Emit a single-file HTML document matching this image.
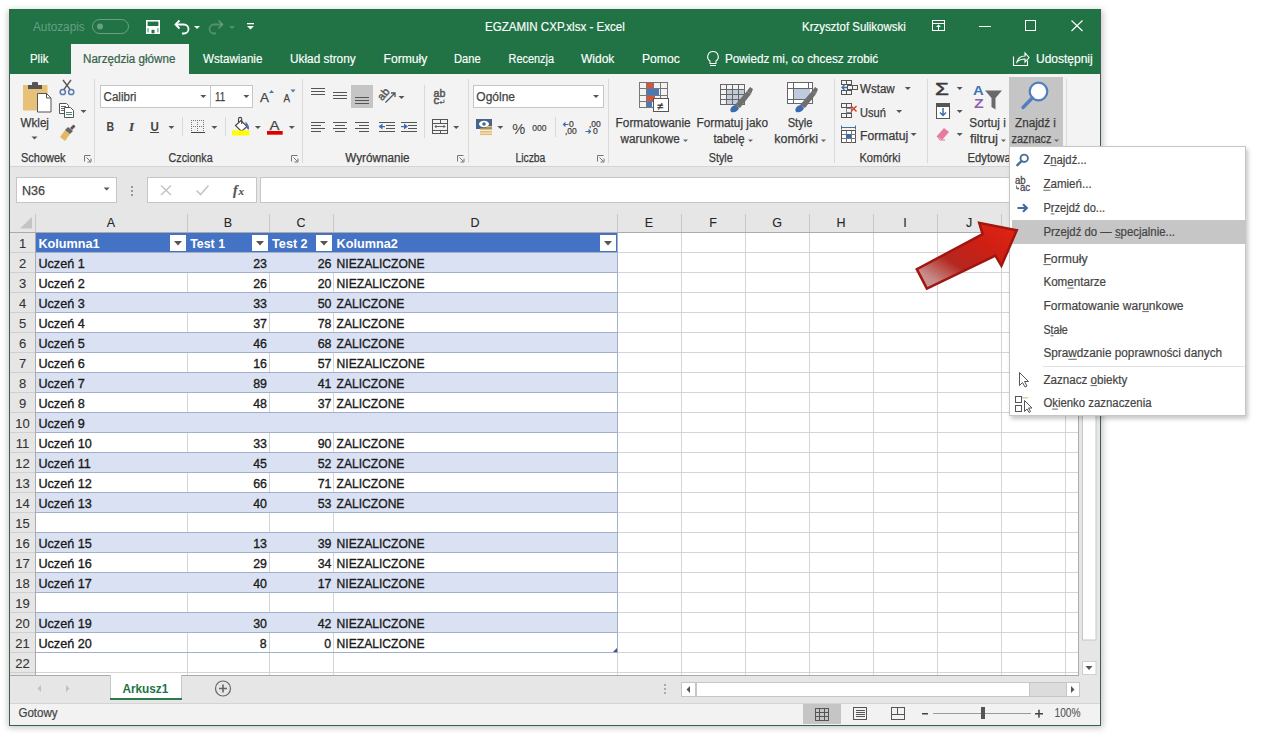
<!DOCTYPE html>
<html><head><meta charset="utf-8">
<style>
*{margin:0;padding:0}
html,body{width:1270px;height:745px;overflow:hidden;background:#fff}
svg{display:block}
text{font-family:"Liberation Sans",sans-serif}
</style></head><body>
<svg width="1270" height="745" viewBox="0 0 1270 745">
<defs><filter id="sh" x="-5%" y="-5%" width="110%" height="110%"><feGaussianBlur stdDeviation="3"/></filter><filter id="msh" x="-10%" y="-10%" width="120%" height="120%"><feGaussianBlur stdDeviation="2"/></filter><linearGradient id="ag" x1="0" y1="1" x2="1" y2="0"><stop offset="0" stop-color="#d0a0a0"/><stop offset="0.15" stop-color="#c68a88"/><stop offset="0.38" stop-color="#b5271f"/><stop offset="0.65" stop-color="#cc1f14"/><stop offset="1" stop-color="#e52412"/></linearGradient></defs>
<rect x="8" y="10" width="1095" height="718" fill="rgba(0,0,0,0.22)" filter="url(#sh)"/>
<rect x="9" y="9" width="1092" height="717" fill="#e6e6e6" />
<rect x="9" y="9" width="1092" height="65" fill="#217346" />
<rect x="9" y="9" width="1" height="717" fill="#3d5f4e" />
<rect x="1100" y="9" width="1" height="717" fill="#3d5f4e" />
<rect x="9" y="725" width="1092" height="1" fill="#3d5f4e" />
<rect x="10" y="724" width="1090" height="1" fill="#e8f4ee" />
<rect x="1099" y="704" width="1" height="21" fill="#e8f4ee" />
<rect x="10" y="74" width="1" height="651" fill="#e3f1ea" />
<text x="33.00" y="31" font-size="12" fill="rgba(255,255,255,0.32)" textLength="51.69" lengthAdjust="spacingAndGlyphs" >Autozapis</text>
<rect x="92.5" y="19.5" width="36" height="14" rx="7" fill="none" stroke="rgba(255,255,255,0.32)" stroke-width="1"/>
<circle cx="100" cy="26.5" r="3" fill="rgba(255,255,255,0.32)"/>
<rect x="146.8" y="20.8" width="12.4" height="12.4" fill="none" stroke="#fff" stroke-width="1.6"/>
<rect x="146" y="26" width="14" height="2.2" fill="#ffffff" />
<rect x="148.5" y="28" width="9" height="5" fill="#ffffff" />
<rect x="151.5" y="29.8" width="3" height="3.5" fill="#217346" />
<path d="M176 24.5 h8 a4.5 4.5 0 0 1 0 9 h-2" fill="none" stroke="#ffffff" stroke-width="1.8" />
<path d="M179.5 20.5 l-4 4 l4 4" fill="none" stroke="#ffffff" stroke-width="1.8" />
<path d="M194 26h6l-3 3z" fill="#ffffff" />
<path d="M222 24.5 h-8 a4.5 4.5 0 0 0 0 9 h2" fill="none" stroke="rgba(255,255,255,0.22)" stroke-width="1.8" />
<path d="M218.5 20.5 l4 4 l-4 4" fill="none" stroke="rgba(255,255,255,0.22)" stroke-width="1.8" />
<path d="M229 26h6l-3 3z" fill="rgba(255,255,255,0.22)" />
<rect x="247" y="23" width="7" height="1.3" fill="#ffffff" />
<path d="M247 26h7l-3.5 3.5z" fill="#ffffff" />
<text x="485.00" y="31" font-size="12" fill="#ffffff" textLength="139.78" lengthAdjust="spacingAndGlyphs" stroke="#ffffff" stroke-width="0.15" >EGZAMIN CXP.xlsx  -  Excel</text>
<text x="802.00" y="31" font-size="12" fill="#ffffff" textLength="103.70" lengthAdjust="spacingAndGlyphs" stroke="#ffffff" stroke-width="0.15" >Krzysztof Sulikowski</text>
<rect x="932.5" y="20.5" width="12" height="10" fill="none" stroke="#fff" stroke-width="1"/>
<rect x="933" y="23" width="12" height="1" fill="#ffffff" />
<path d="M938.5 24.5l-2.5 2.5h5z" fill="#ffffff" />
<rect x="938" y="26" width="1" height="4" fill="#ffffff" />
<rect x="979" y="26" width="12" height="1" fill="#ffffff" />
<rect x="1025.5" y="20.5" width="10" height="10" fill="none" stroke="#fff" stroke-width="1"/>
<path d="M1071.5 20.5l11 10.5M1082.5 20.5l-11 10.5" fill="none" stroke="#ffffff" stroke-width="1.1" />
<rect x="71" y="44" width="118" height="30" fill="#f3f3f3" />
<text x="30.00" y="63" font-size="12" fill="#ffffff" textLength="18.38" lengthAdjust="spacingAndGlyphs" stroke="#ffffff" stroke-width="0.15" >Plik</text>
<text x="83.00" y="63" font-size="12" fill="#35614a" textLength="92.41" lengthAdjust="spacingAndGlyphs" stroke="#35614a" stroke-width="0.2" >Narzędzia główne</text>
<text x="203.00" y="63" font-size="12" fill="#ffffff" textLength="59.38" lengthAdjust="spacingAndGlyphs" stroke="#ffffff" stroke-width="0.15" >Wstawianie</text>
<text x="290.00" y="63" font-size="12" fill="#ffffff" textLength="65.69" lengthAdjust="spacingAndGlyphs" stroke="#ffffff" stroke-width="0.15" >Układ strony</text>
<text x="383.50" y="63" font-size="12" fill="#ffffff" textLength="43.85" lengthAdjust="spacingAndGlyphs" stroke="#ffffff" stroke-width="0.15" >Formuły</text>
<text x="454.00" y="63" font-size="12" fill="#ffffff" textLength="26.71" lengthAdjust="spacingAndGlyphs" stroke="#ffffff" stroke-width="0.15" >Dane</text>
<text x="508.50" y="63" font-size="12" fill="#ffffff" textLength="45.53" lengthAdjust="spacingAndGlyphs" stroke="#ffffff" stroke-width="0.15" >Recenzja</text>
<text x="581.00" y="63" font-size="12" fill="#ffffff" textLength="33.34" lengthAdjust="spacingAndGlyphs" stroke="#ffffff" stroke-width="0.15" >Widok</text>
<text x="642.00" y="63" font-size="12" fill="#ffffff" textLength="37.85" lengthAdjust="spacingAndGlyphs" stroke="#ffffff" stroke-width="0.15" >Pomoc</text>
<path d="M713 51.5a5.2 5.2 0 0 0-3 9.5v2.5h6v-2.5a5.2 5.2 0 0 0-3-9.5z" fill="none" stroke="#ffffff" stroke-width="1.1" />
<rect x="710" y="65" width="6" height="1" fill="#ffffff" />
<text x="725.00" y="63" font-size="12" fill="#ffffff" textLength="153.21" lengthAdjust="spacingAndGlyphs" stroke="#ffffff" stroke-width="0.15" >Powiedz mi, co chcesz zrobić</text>
<path d="M1013.5 56.5v9h14v-5" fill="none" stroke="#ffffff" stroke-width="1.1" />
<path d="M1017 62c1-4 4-6 8-6v-3l4 4.5-4 4.5v-3c-3 0-6 1-8 3z" fill="none" stroke="#ffffff" stroke-width="1.1" />
<text x="1036.00" y="63" font-size="12" fill="#ffffff" textLength="56.70" lengthAdjust="spacingAndGlyphs" stroke="#ffffff" stroke-width="0.15" >Udostępnij</text>
<rect x="10" y="74" width="1090" height="92" fill="#f3f3f3" />
<rect x="10" y="166" width="1090" height="1" fill="#d4d4d4" />
<rect x="94" y="79" width="1" height="84" fill="#d9d9d9" />
<rect x="302" y="79" width="1" height="84" fill="#d9d9d9" />
<rect x="468" y="79" width="1" height="84" fill="#d9d9d9" />
<rect x="608" y="79" width="1" height="84" fill="#d9d9d9" />
<rect x="834" y="79" width="1" height="84" fill="#d9d9d9" />
<rect x="927" y="79" width="1" height="84" fill="#d9d9d9" />
<rect x="1066" y="79" width="1" height="84" fill="#d9d9d9" />
<text x="21.00" y="162" font-size="12" fill="#3b3b3b" textLength="44.50" lengthAdjust="spacingAndGlyphs" stroke="#3b3b3b" stroke-width="0.25" >Schowek</text>
<text x="168.60" y="162" font-size="12" fill="#3b3b3b" textLength="44.03" lengthAdjust="spacingAndGlyphs" stroke="#3b3b3b" stroke-width="0.25" >Czcionka</text>
<text x="345.30" y="162" font-size="12" fill="#3b3b3b" textLength="64.22" lengthAdjust="spacingAndGlyphs" stroke="#3b3b3b" stroke-width="0.25" >Wyrównanie</text>
<text x="515.40" y="162" font-size="12" fill="#3b3b3b" textLength="29.93" lengthAdjust="spacingAndGlyphs" stroke="#3b3b3b" stroke-width="0.25" >Liczba</text>
<text x="708.80" y="162" font-size="12" fill="#3b3b3b" textLength="23.91" lengthAdjust="spacingAndGlyphs" stroke="#3b3b3b" stroke-width="0.25" >Style</text>
<text x="859.40" y="162" font-size="12" fill="#3b3b3b" textLength="41.01" lengthAdjust="spacingAndGlyphs" stroke="#3b3b3b" stroke-width="0.25" >Komórki</text>
<text x="967.60" y="162" font-size="12" fill="#3b3b3b" textLength="58.03" lengthAdjust="spacingAndGlyphs" stroke="#3b3b3b" stroke-width="0.25" >Edytowanie</text>
<path d="M84.5 161.5v-6h6" fill="none" stroke="#777" stroke-width="1"/>
<path d="M86.5 157.5l4 4M91 158.5v3.5h-3.5" fill="none" stroke="#777" stroke-width="1"/>
<path d="M291.5 161.5v-6h6" fill="none" stroke="#777" stroke-width="1"/>
<path d="M293.5 157.5l4 4M298 158.5v3.5h-3.5" fill="none" stroke="#777" stroke-width="1"/>
<path d="M457.5 161.5v-6h6" fill="none" stroke="#777" stroke-width="1"/>
<path d="M459.5 157.5l4 4M464 158.5v3.5h-3.5" fill="none" stroke="#777" stroke-width="1"/>
<path d="M597.5 161.5v-6h6" fill="none" stroke="#777" stroke-width="1"/>
<path d="M599.5 157.5l4 4M604 158.5v3.5h-3.5" fill="none" stroke="#777" stroke-width="1"/>
<rect x="23" y="85" width="24.5" height="25.5" fill="#e8c178"/>
<rect x="28" y="85" width="14" height="4" fill="#555"/>
<rect x="32" y="82" width="6" height="4" rx="1" fill="#555"/>
<path d="M37.5 93.5h9l4.5 4.5v14h-13.5z" fill="#fff" stroke="#555" stroke-width="1" />
<path d="M46.5 93.5v4.5h4.5" fill="none" stroke="#555" stroke-width="1" />
<text x="20.60" y="127" font-size="12" fill="#3b3b3b" textLength="28.33" lengthAdjust="spacingAndGlyphs" stroke="#3b3b3b" stroke-width="0.25" >Wklej</text>
<path d="M31.5 136.5h6l-3 3z" fill="#555"/>
<circle cx="62.8" cy="92" r="2.6" fill="none" stroke="#5a79b2" stroke-width="1.5"/>
<circle cx="71.2" cy="92" r="2.6" fill="none" stroke="#5a79b2" stroke-width="1.5"/>
<path d="M64 89.3l7-9.3M70 89.3l-7-9.3" fill="none" stroke="#555" stroke-width="1.4" />
<path d="M59.5 103.5h7l2 2v8h-9z" fill="#fff" stroke="#555" stroke-width="1" />
<path d="M64.5 107.5h6l3 3v7h-9z" fill="#fff" stroke="#555" stroke-width="1" />
<rect x="61" y="106" width="5" height="1" fill="#666" />
<rect x="61" y="108" width="3" height="1" fill="#666" />
<rect x="61" y="110" width="3" height="1" fill="#666" />
<rect x="66" y="112" width="6" height="1" fill="#4a8a7a" />
<rect x="66" y="114" width="6" height="1" fill="#4a8a7a" />
<path d="M80.5 110.0h6l-3 3z" fill="#555"/>
<path d="M60 137l5-7 5 4-5 7z" fill="#e3b865" />
<path d="M65 130l3-3 5 4-3 3z" fill="#666" />
<path d="M70 128l3.5-3.5 2 2-3.5 3.5z" fill="#555" />
<rect x="100.5" y="85.5" width="152" height="22" fill="#fff" stroke="#c6c6c6" stroke-width="1"/>
<rect x="210" y="86" width="1" height="21" fill="#c6c6c6" />
<text x="103.60" y="101" font-size="12" fill="#444" textLength="32.73" lengthAdjust="spacingAndGlyphs" stroke="#444" stroke-width="0.25" >Calibri</text>
<path d="M200.3 95.0h6l-3 3z" fill="#555"/>
<path d="M243.3 95.0h6l-3 3z" fill="#555"/>
<text x="215.00" y="101" font-size="12" fill="#444" textLength="10.15" lengthAdjust="spacingAndGlyphs" stroke="#444" stroke-width="0.25" >11</text>
<text x="260.00" y="102" font-size="13.5" fill="#444" textLength="9.00" lengthAdjust="spacingAndGlyphs" stroke="#444" stroke-width="0.25" >A</text>
<path d="M269 93h5l-2.5-3z" fill="#4a7ab8" />
<text x="283.50" y="102" font-size="10.5" fill="#444" textLength="6.56" lengthAdjust="spacingAndGlyphs" stroke="#444" stroke-width="0.25" >A</text>
<path d="M290.5 89.5h5l-2.5 3z" fill="#4a7ab8" />
<text x="106.60" y="131" font-size="12.5" fill="#444" font-weight="bold" textLength="7.63" lengthAdjust="spacingAndGlyphs" >B</text>
<text x="129.00" y="131" font-size="13" fill="#444" stroke="#444" stroke-width="0.2" style="font-family:Liberation Serif;font-style:italic;font-weight:bold">I</text>
<text x="150.50" y="131" font-size="12.5" fill="#444" font-weight="bold" textLength="8.33" lengthAdjust="spacingAndGlyphs" >U</text>
<rect x="150" y="132" width="9" height="1" fill="#444" />
<path d="M168.4 126.0h6l-3 3z" fill="#555"/>
<rect x="182" y="117" width="1" height="19" fill="#d9d9d9" />
<rect x="191" y="120" width="1" height="1" fill="#777" />
<rect x="191" y="126" width="1" height="1" fill="#777" />
<rect x="191" y="120" width="1" height="1" fill="#777" />
<rect x="203" y="120" width="1" height="1" fill="#777" />
<rect x="197" y="120" width="1" height="1" fill="#777" />
<rect x="193" y="120" width="1" height="1" fill="#777" />
<rect x="193" y="126" width="1" height="1" fill="#777" />
<rect x="191" y="122" width="1" height="1" fill="#777" />
<rect x="203" y="122" width="1" height="1" fill="#777" />
<rect x="197" y="122" width="1" height="1" fill="#777" />
<rect x="195" y="120" width="1" height="1" fill="#777" />
<rect x="195" y="126" width="1" height="1" fill="#777" />
<rect x="191" y="124" width="1" height="1" fill="#777" />
<rect x="203" y="124" width="1" height="1" fill="#777" />
<rect x="197" y="124" width="1" height="1" fill="#777" />
<rect x="197" y="120" width="1" height="1" fill="#777" />
<rect x="197" y="126" width="1" height="1" fill="#777" />
<rect x="191" y="126" width="1" height="1" fill="#777" />
<rect x="203" y="126" width="1" height="1" fill="#777" />
<rect x="197" y="126" width="1" height="1" fill="#777" />
<rect x="199" y="120" width="1" height="1" fill="#777" />
<rect x="199" y="126" width="1" height="1" fill="#777" />
<rect x="191" y="128" width="1" height="1" fill="#777" />
<rect x="203" y="128" width="1" height="1" fill="#777" />
<rect x="197" y="128" width="1" height="1" fill="#777" />
<rect x="201" y="120" width="1" height="1" fill="#777" />
<rect x="201" y="126" width="1" height="1" fill="#777" />
<rect x="191" y="130" width="1" height="1" fill="#777" />
<rect x="203" y="130" width="1" height="1" fill="#777" />
<rect x="197" y="130" width="1" height="1" fill="#777" />
<rect x="203" y="120" width="1" height="1" fill="#777" />
<rect x="203" y="126" width="1" height="1" fill="#777" />
<rect x="191" y="132" width="1" height="1" fill="#777" />
<rect x="203" y="132" width="1" height="1" fill="#777" />
<rect x="197" y="132" width="1" height="1" fill="#777" />
<rect x="191" y="132" width="14" height="1" fill="#444" />
<path d="M211.4 126.0h6l-3 3z" fill="#555"/>
<rect x="225" y="117" width="1" height="19" fill="#d9d9d9" />
<path d="M235.5 125.5l5.5-5 6 6-5.5 5z" fill="#fff" stroke="#444" stroke-width="1.1" />
<path d="M238.5 122v-3a1.6 1.6 0 0 1 3.2 0v5" fill="none" stroke="#444" stroke-width="1.1" />
<path d="M245.5 121.5c2.5 2 4 5 3.5 8-2 .3-3.5-3-3.5-8z" fill="#4d6fa8" />
<rect x="232" y="130.5" width="17.5" height="5" fill="#ffff00" />
<path d="M254.89999999999998 126.0h6l-3 3z" fill="#555"/>
<text x="269.40" y="130" font-size="12.5" fill="#444" textLength="10.01" lengthAdjust="spacingAndGlyphs" stroke="#444" stroke-width="0.25" >A</text>
<rect x="267" y="131" width="15.7" height="3.7" fill="#e00000" />
<path d="M288.8 126.0h6l-3 3z" fill="#555"/>
<rect x="311" y="88" width="14" height="1" fill="#555" />
<rect x="311" y="91" width="14" height="1" fill="#555" />
<rect x="311" y="94" width="14" height="1" fill="#555" />
<rect x="333" y="92" width="14" height="1" fill="#555" />
<rect x="333" y="95" width="14" height="1" fill="#555" />
<rect x="333" y="98" width="14" height="1" fill="#555" />
<rect x="351" y="85" width="22" height="23" fill="#c5c5c5" />
<rect x="355" y="97" width="14" height="1" fill="#555" />
<rect x="355" y="100" width="14" height="1" fill="#555" />
<rect x="355" y="103" width="14" height="1" fill="#555" />
<text x="377.00" y="98" font-size="11" fill="#555" stroke="#555" stroke-width="0.4" transform="rotate(-50 383 94)">ab</text>
<path d="M385.5 102.5l9.5-9.5M391 93h4v4" fill="none" stroke="#555" stroke-width="1.3" />
<path d="M398.5 96.0h6l-3 3z" fill="#555"/>
<rect x="311" y="122" width="14" height="1" fill="#555" />
<rect x="311" y="125" width="10" height="1" fill="#555" />
<rect x="311" y="128" width="14" height="1" fill="#555" />
<rect x="311" y="131" width="10" height="1" fill="#555" />
<rect x="333" y="122" width="14" height="1" fill="#555" />
<rect x="335" y="125" width="10" height="1" fill="#555" />
<rect x="333" y="128" width="14" height="1" fill="#555" />
<rect x="335" y="131" width="10" height="1" fill="#555" />
<rect x="355" y="122" width="14" height="1" fill="#555" />
<rect x="359" y="125" width="10" height="1" fill="#555" />
<rect x="355" y="128" width="14" height="1" fill="#555" />
<rect x="359" y="131" width="10" height="1" fill="#555" />
<rect x="379" y="122" width="16" height="1" fill="#555" />
<rect x="386" y="125" width="9" height="1" fill="#555" />
<rect x="386" y="128" width="9" height="1" fill="#555" />
<rect x="379" y="131" width="16" height="1" fill="#555" />
<path d="M378.5 126.5l4-3v6z" fill="#3b6cb0" />
<rect x="381" y="126" width="4" height="1.2" fill="#3b6cb0" />
<rect x="401" y="122" width="16" height="1" fill="#555" />
<rect x="408" y="125" width="9" height="1" fill="#555" />
<rect x="408" y="128" width="9" height="1" fill="#555" />
<rect x="401" y="131" width="16" height="1" fill="#555" />
<path d="M408 126.5l-4-3v6z" fill="#3b6cb0" />
<rect x="401" y="126" width="4" height="1.2" fill="#3b6cb0" />
<rect x="424" y="85" width="1" height="53" fill="#d9d9d9" />
<text x="433.50" y="96.5" font-size="11.5" fill="#555" textLength="11.80" lengthAdjust="spacingAndGlyphs" stroke="#555" stroke-width="0.5" >ab</text>
<text x="433.50" y="104" font-size="11.5" fill="#555" stroke="#555" stroke-width="0.5" >c</text>
<path d="M444 99.5v3h-4M441.5 101l-1.5 1.5 1.5 1.5" fill="none" stroke="#555" stroke-width="0.9" />
<rect x="432.5" y="119.5" width="15" height="14" fill="none" stroke="#555" stroke-width="1"/>
<rect x="433" y="123" width="14" height="1" fill="#555" />
<rect x="433" y="130" width="14" height="1" fill="#555" />
<rect x="440" y="120" width="1" height="3" fill="#555" />
<rect x="440" y="131" width="1" height="3" fill="#555" />
<path d="M435 126.5h10M436.5 125l-1.5 1.5 1.5 1.5M443.5 125l1.5 1.5-1.5 1.5" fill="none" stroke="#555" stroke-width="0.9" />
<path d="M453.2 126.0h6l-3 3z" fill="#555"/>
<rect x="473.5" y="85.5" width="130" height="22" fill="#fff" stroke="#c6c6c6" stroke-width="1"/>
<text x="476.30" y="101" font-size="12" fill="#444" textLength="38.69" lengthAdjust="spacingAndGlyphs" stroke="#444" stroke-width="0.25" >Ogólne</text>
<path d="M593 95.0h6l-3 3z" fill="#555"/>
<rect x="476" y="119" width="16" height="10" fill="#46648c" />
<ellipse cx="484" cy="124" rx="5" ry="3.2" fill="#fff"/>
<circle cx="484" cy="124" r="1.8" fill="#46648c"/>
<rect x="486" y="126" width="6" height="1.6" fill="#e6bd6e" />
<rect x="480" y="128.5" width="12" height="1.6" fill="#e6bd6e" />
<rect x="480" y="131" width="12" height="1.6" fill="#e6bd6e" />
<rect x="480" y="133.5" width="12" height="1.6" fill="#e6bd6e" />
<path d="M497.3 126.0h6l-3 3z" fill="#555"/>
<text x="512.30" y="134" font-size="14" fill="#444" textLength="12.97" lengthAdjust="spacingAndGlyphs" stroke="#444" stroke-width="0.05" >%</text>
<text x="532.20" y="131" font-size="9.5" fill="#444" textLength="14.17" lengthAdjust="spacingAndGlyphs" stroke="#444" stroke-width="0.25" >000</text>
<rect x="555" y="117" width="1" height="20" fill="#d9d9d9" />
<text x="569.00" y="126.5" font-size="8.5" fill="#444" stroke="#444" stroke-width="0.25" >0</text>
<text x="565.00" y="134" font-size="8.5" fill="#444" stroke="#444" stroke-width="0.25" >,00</text>
<path d="M563.5 124.5h5M565.5 122.5l-2 2 2 2" fill="none" stroke="#3b6cb0" stroke-width="1.2" />
<text x="589.00" y="126.5" font-size="8.5" fill="#444" stroke="#444" stroke-width="0.25" >,00</text>
<text x="593.00" y="134" font-size="8.5" fill="#444" stroke="#444" stroke-width="0.25" >0</text>
<path d="M585.5 131.5h5M588.5 129.5l2 2-2 2" fill="none" stroke="#3b6cb0" stroke-width="1.2" />
<rect x="639" y="82" width="29" height="1" fill="#777" />
<rect x="639" y="88" width="29" height="1" fill="#777" />
<rect x="639" y="95" width="29" height="1" fill="#777" />
<rect x="639" y="101" width="29" height="1" fill="#777" />
<rect x="639" y="107" width="29" height="1" fill="#777" />
<rect x="639" y="82" width="1" height="26" fill="#777" />
<rect x="646" y="82" width="1" height="26" fill="#777" />
<rect x="653" y="82" width="1" height="26" fill="#777" />
<rect x="660" y="82" width="1" height="26" fill="#777" />
<rect x="667" y="82" width="1" height="26" fill="#777" />
<rect x="647" y="83" width="6" height="5" fill="#d8553d" />
<rect x="647" y="89" width="12" height="6" fill="#4a78b8" />
<rect x="647" y="96" width="8" height="5" fill="#d8553d" />
<rect x="647" y="102" width="5" height="5" fill="#4a78b8" />
<rect x="653.5" y="98.5" width="15" height="13" fill="#fff" stroke="#555" stroke-width="1"/>
<text x="657.00" y="109.5" font-size="11" fill="#333" stroke="#333" stroke-width="0.3" >≠</text>
<text x="615.60" y="127" font-size="12" fill="#3b3b3b" textLength="75.03" lengthAdjust="spacingAndGlyphs" stroke="#3b3b3b" stroke-width="0.25" >Formatowanie</text>
<text x="620.57" y="143" font-size="12" fill="#3b3b3b" textLength="59.14" lengthAdjust="spacingAndGlyphs" stroke="#3b3b3b" stroke-width="0.25" >warunkowe</text>
<path d="M683 139.5h5l-2.5 2.5z" fill="#666"/>
<rect x="727" y="89" width="18" height="16" fill="#c3cad8" />
<rect x="720" y="84" width="25" height="1" fill="#666" />
<rect x="720" y="89" width="25" height="1" fill="#666" />
<rect x="720" y="94" width="25" height="1" fill="#666" />
<rect x="720" y="99" width="25" height="1" fill="#666" />
<rect x="720" y="104" width="25" height="1" fill="#666" />
<rect x="720" y="84" width="1" height="21" fill="#666" />
<rect x="726" y="84" width="1" height="21" fill="#666" />
<rect x="732" y="84" width="1" height="21" fill="#666" />
<rect x="738" y="84" width="1" height="21" fill="#666" />
<rect x="744" y="84" width="1" height="21" fill="#666" />
<path d="M731 112c-2-3 1-7 5-7l3 3c-1 3-4 5-8 4z" fill="#3b6cb0" />
<path d="M735 105l12-14 4 3-11 14z" fill="#6f6f6f" />
<path d="M747 91l3-4 3 2-2 5z" fill="#6f6f6f" />
<text x="696.50" y="127" font-size="12" fill="#3b3b3b" textLength="71.49" lengthAdjust="spacingAndGlyphs" stroke="#3b3b3b" stroke-width="0.25" >Formatuj jako</text>
<text x="713.40" y="143" font-size="12" fill="#3b3b3b" textLength="31.10" lengthAdjust="spacingAndGlyphs" stroke="#3b3b3b" stroke-width="0.25" >tabelę</text>
<path d="M748 139.5h5l-2.5 2.5z" fill="#666"/>
<rect x="787.5" y="82.5" width="25" height="21" fill="#fff" stroke="#666" stroke-width="1"/>
<rect x="794" y="88" width="16" height="11" fill="#bccbe0" />
<rect x="788" y="88" width="25" height="1" fill="#666" />
<rect x="788" y="99" width="25" height="1" fill="#666" />
<rect x="793" y="83" width="1" height="21" fill="#666" />
<rect x="808" y="83" width="1" height="5" fill="#666" />
<rect x="808" y="99" width="1" height="5" fill="#666" />
<path d="M796 112c-2-3 1-7 5-7l3 3c-1 3-4 5-8 4z" fill="#3b6cb0" />
<path d="M800 105l12-14 4 3-11 14z" fill="#6f6f6f" />
<path d="M812 91l3-4 3 2-2 5z" fill="#6f6f6f" />
<text x="787.70" y="127" font-size="12" fill="#3b3b3b" textLength="24.79" lengthAdjust="spacingAndGlyphs" stroke="#3b3b3b" stroke-width="0.25" >Style</text>
<text x="774.30" y="143" font-size="12" fill="#3b3b3b" textLength="43.62" lengthAdjust="spacingAndGlyphs" stroke="#3b3b3b" stroke-width="0.25" >komórki</text>
<path d="M821 139.5h5l-2.5 2.5z" fill="#666"/>
<rect x="841.5" y="80.5" width="5" height="4" fill="none" stroke="#555" stroke-width="1"/>
<rect x="846.5" y="80.5" width="5" height="4" fill="none" stroke="#555" stroke-width="1"/>
<rect x="841.5" y="90.5" width="5" height="4" fill="none" stroke="#555" stroke-width="1"/>
<rect x="846.5" y="90.5" width="5" height="4" fill="none" stroke="#555" stroke-width="1"/>
<rect x="847.5" y="85.5" width="5" height="4" fill="none" stroke="#555" stroke-width="1"/>
<rect x="852.5" y="85.5" width="5" height="4" fill="none" stroke="#555" stroke-width="1"/>
<path d="M842 87.5h5M844.5 85l-2.5 2.5 2.5 2.5" fill="none" stroke="#3b72a8" stroke-width="1.3" />
<text x="860.00" y="93" font-size="12" fill="#3b3b3b" textLength="34.70" lengthAdjust="spacingAndGlyphs" stroke="#3b3b3b" stroke-width="0.25" >Wstaw</text>
<path d="M904.8 87.0h6l-3 3z" fill="#555"/>
<rect x="841.5" y="103.5" width="5" height="4" fill="none" stroke="#555" stroke-width="1"/>
<rect x="846.5" y="103.5" width="5" height="4" fill="none" stroke="#555" stroke-width="1"/>
<rect x="841.5" y="113.5" width="5" height="4" fill="none" stroke="#555" stroke-width="1"/>
<rect x="846.5" y="113.5" width="5" height="4" fill="none" stroke="#555" stroke-width="1"/>
<rect x="846.5" y="108.5" width="5" height="4" fill="none" stroke="#888" stroke-width="1"/>
<path d="M851 106l5.5 5.5M856.5 106l-5.5 5.5" fill="none" stroke="#d83b2b" stroke-width="1.4" />
<text x="860.00" y="117" font-size="12" fill="#3b3b3b" textLength="25.91" lengthAdjust="spacingAndGlyphs" stroke="#3b3b3b" stroke-width="0.25" >Usuń</text>
<path d="M896.2 110.0h6l-3 3z" fill="#555"/>
<rect x="841.5" y="130.5" width="14" height="12" fill="#fff" stroke="#555" stroke-width="1"/>
<rect x="842" y="134" width="14" height="1" fill="#777" />
<rect x="842" y="138" width="14" height="1" fill="#777" />
<rect x="846" y="131" width="1" height="12" fill="#777" />
<rect x="851" y="131" width="1" height="12" fill="#777" />
<rect x="846" y="134" width="5" height="4" fill="#3b6cb0" />
<path d="M842 127.5h14M841.5 125.5v4M855.5 125.5v4" fill="none" stroke="#3b72a8" stroke-width="1" />
<text x="860.00" y="139.5" font-size="12" fill="#3b3b3b" textLength="48.15" lengthAdjust="spacingAndGlyphs" stroke="#3b3b3b" stroke-width="0.25" >Formatuj</text>
<path d="M910.6 133.0h6l-3 3z" fill="#555"/>
<text x="935.00" y="95" font-size="17" fill="#3a3a3a" textLength="13.86" lengthAdjust="spacingAndGlyphs" stroke="#3a3a3a" stroke-width="0.5" >Σ</text>
<path d="M956.7 87.0h6l-3 3z" fill="#555"/>
<rect x="936.5" y="103.5" width="13" height="15" fill="#fff" stroke="#555" stroke-width="1"/>
<rect x="937" y="104" width="12" height="3" fill="#555" />
<path d="M943 108v7M940 112.5l3 3 3-3" fill="none" stroke="#3b6cb0" stroke-width="1.5" />
<path d="M956.7 110.0h6l-3 3z" fill="#555"/>
<path d="M937 136l7-8 5 4-7 8z" fill="#e87aa0" />
<path d="M937 136l3 4h5" fill="none" stroke="#d8558a" stroke-width="0.8" />
<path d="M956.7 133.0h6l-3 3z" fill="#555"/>
<text x="973.00" y="94.5" font-size="13" fill="#3f72b5" font-weight="bold" textLength="10.71" lengthAdjust="spacingAndGlyphs" >A</text>
<text x="974.00" y="108.2" font-size="13" fill="#8f5fb0" font-weight="bold" textLength="9.72" lengthAdjust="spacingAndGlyphs" >Z</text>
<path d="M985 90.5h17l-6.5 7.5v11.5l-4-2.5v-9z" fill="#6a6a6a" />
<text x="969.30" y="127" font-size="12" fill="#3b3b3b" textLength="36.54" lengthAdjust="spacingAndGlyphs" stroke="#3b3b3b" stroke-width="0.25" >Sortuj i</text>
<text x="970.00" y="143" font-size="12" fill="#3b3b3b" textLength="27.98" lengthAdjust="spacingAndGlyphs" stroke="#3b3b3b" stroke-width="0.25" >filtruj</text>
<path d="M1001 139.5h5l-2.5 2.5z" fill="#666"/>
<rect x="1009" y="77" width="54" height="70" fill="#c5c5c5" />
<circle cx="1038.5" cy="91.5" r="8.8" fill="#fdfdfd" stroke="#4f7fbf" stroke-width="2.2"/>
<path d="M1032.3 98l-9.3 9.5" fill="none" stroke="#4f7fbf" stroke-width="3.4" stroke-linecap="round"/>
<text x="1015.00" y="127" font-size="12" fill="#3b3b3b" textLength="40.92" lengthAdjust="spacingAndGlyphs" stroke="#3b3b3b" stroke-width="0.25" >Znajdź i</text>
<text x="1011.60" y="143" font-size="12" fill="#3b3b3b" textLength="39.91" lengthAdjust="spacingAndGlyphs" stroke="#3b3b3b" stroke-width="0.25" >zaznacz</text>
<path d="M1054 139.5h5l-2.5 2.5z" fill="#666"/>
<rect x="10" y="167" width="1090" height="43" fill="#e6e6e6" />
<rect x="16.5" y="177.5" width="100" height="25" fill="#fff" stroke="#c6c6c6" stroke-width="1"/>
<text x="22.00" y="195" font-size="12" fill="#444" textLength="23.02" lengthAdjust="spacingAndGlyphs" stroke="#444" stroke-width="0.25" >N36</text>
<path d="M103.6 187.5h6l-3 3z" fill="#555"/>
<rect x="131" y="186" width="2" height="2" fill="#999" />
<rect x="131" y="190" width="2" height="2" fill="#999" />
<rect x="131" y="194" width="2" height="2" fill="#999" />
<rect x="147.5" y="177.5" width="109" height="25" fill="#fff" stroke="#c6c6c6" stroke-width="1"/>
<path d="M161 185.5l10 9.5M171 185.5l-10 9.5" fill="none" stroke="#c4c4c4" stroke-width="1.5" />
<path d="M196.5 190.5l4 4 8-9" fill="none" stroke="#c4c4c4" stroke-width="1.6" />
<text x="233.00" y="195" font-size="14" fill="#555" stroke="#555" stroke-width="0.2" style="font-family:Liberation Serif;font-style:italic;font-weight:bold">f</text>
<text x="238.50" y="195" font-size="11" fill="#555" stroke="#555" stroke-width="0.2" style="font-family:Liberation Serif;font-style:italic;font-weight:bold">x</text>
<rect x="260.5" y="177.5" width="840" height="25" fill="#fff" stroke="#c6c6c6" stroke-width="1"/>
<rect x="10" y="210" width="1068" height="22" fill="#e6e6e6" />
<rect x="36" y="233" width="1042" height="442" fill="#ffffff" />
<rect x="10" y="233" width="25" height="442" fill="#e6e6e6" />
<path d="M32 217v11.5h-12z" fill="#c4c4c4" />
<rect x="187" y="214" width="1" height="18" fill="#c8c8c8" />
<rect x="269" y="214" width="1" height="18" fill="#c8c8c8" />
<rect x="333" y="214" width="1" height="18" fill="#c8c8c8" />
<rect x="617" y="214" width="1" height="18" fill="#c8c8c8" />
<rect x="681" y="214" width="1" height="18" fill="#c8c8c8" />
<rect x="745" y="214" width="1" height="18" fill="#c8c8c8" />
<rect x="809" y="214" width="1" height="18" fill="#c8c8c8" />
<rect x="873" y="214" width="1" height="18" fill="#c8c8c8" />
<rect x="937" y="214" width="1" height="18" fill="#c8c8c8" />
<rect x="1001" y="214" width="1" height="18" fill="#c8c8c8" />
<rect x="1065" y="214" width="1" height="18" fill="#c8c8c8" />
<rect x="35" y="214" width="1" height="18" fill="#c8c8c8" />
<text x="111.00" y="226.5" font-size="12.5" fill="#262626" text-anchor="middle" stroke="#262626" stroke-width="0.1" >A</text>
<text x="228.00" y="226.5" font-size="12.5" fill="#262626" text-anchor="middle" stroke="#262626" stroke-width="0.1" >B</text>
<text x="301.00" y="226.5" font-size="12.5" fill="#262626" text-anchor="middle" stroke="#262626" stroke-width="0.1" >C</text>
<text x="475.00" y="226.5" font-size="12.5" fill="#262626" text-anchor="middle" stroke="#262626" stroke-width="0.1" >D</text>
<text x="649.00" y="226.5" font-size="12.5" fill="#262626" text-anchor="middle" stroke="#262626" stroke-width="0.1" >E</text>
<text x="713.00" y="226.5" font-size="12.5" fill="#262626" text-anchor="middle" stroke="#262626" stroke-width="0.1" >F</text>
<text x="777.00" y="226.5" font-size="12.5" fill="#262626" text-anchor="middle" stroke="#262626" stroke-width="0.1" >G</text>
<text x="841.00" y="226.5" font-size="12.5" fill="#262626" text-anchor="middle" stroke="#262626" stroke-width="0.1" >H</text>
<text x="905.00" y="226.5" font-size="12.5" fill="#262626" text-anchor="middle" stroke="#262626" stroke-width="0.1" >I</text>
<text x="969.00" y="226.5" font-size="12.5" fill="#262626" text-anchor="middle" stroke="#262626" stroke-width="0.1" >J</text>
<text x="1033.00" y="226.5" font-size="12.5" fill="#262626" text-anchor="middle" stroke="#262626" stroke-width="0.1" >K</text>
<rect x="10" y="232" width="1068" height="1" fill="#ababab" />
<rect x="35" y="232" width="1" height="443" fill="#ababab" />
<rect x="36" y="252" width="1042" height="1" fill="#d4d4d4" />
<rect x="10" y="252" width="25" height="1" fill="#d0d0d0" />
<rect x="36" y="272" width="1042" height="1" fill="#d4d4d4" />
<rect x="10" y="272" width="25" height="1" fill="#d0d0d0" />
<rect x="36" y="292" width="1042" height="1" fill="#d4d4d4" />
<rect x="10" y="292" width="25" height="1" fill="#d0d0d0" />
<rect x="36" y="312" width="1042" height="1" fill="#d4d4d4" />
<rect x="10" y="312" width="25" height="1" fill="#d0d0d0" />
<rect x="36" y="332" width="1042" height="1" fill="#d4d4d4" />
<rect x="10" y="332" width="25" height="1" fill="#d0d0d0" />
<rect x="36" y="352" width="1042" height="1" fill="#d4d4d4" />
<rect x="10" y="352" width="25" height="1" fill="#d0d0d0" />
<rect x="36" y="372" width="1042" height="1" fill="#d4d4d4" />
<rect x="10" y="372" width="25" height="1" fill="#d0d0d0" />
<rect x="36" y="392" width="1042" height="1" fill="#d4d4d4" />
<rect x="10" y="392" width="25" height="1" fill="#d0d0d0" />
<rect x="36" y="412" width="1042" height="1" fill="#d4d4d4" />
<rect x="10" y="412" width="25" height="1" fill="#d0d0d0" />
<rect x="36" y="432" width="1042" height="1" fill="#d4d4d4" />
<rect x="10" y="432" width="25" height="1" fill="#d0d0d0" />
<rect x="36" y="452" width="1042" height="1" fill="#d4d4d4" />
<rect x="10" y="452" width="25" height="1" fill="#d0d0d0" />
<rect x="36" y="472" width="1042" height="1" fill="#d4d4d4" />
<rect x="10" y="472" width="25" height="1" fill="#d0d0d0" />
<rect x="36" y="492" width="1042" height="1" fill="#d4d4d4" />
<rect x="10" y="492" width="25" height="1" fill="#d0d0d0" />
<rect x="36" y="512" width="1042" height="1" fill="#d4d4d4" />
<rect x="10" y="512" width="25" height="1" fill="#d0d0d0" />
<rect x="36" y="532" width="1042" height="1" fill="#d4d4d4" />
<rect x="10" y="532" width="25" height="1" fill="#d0d0d0" />
<rect x="36" y="552" width="1042" height="1" fill="#d4d4d4" />
<rect x="10" y="552" width="25" height="1" fill="#d0d0d0" />
<rect x="36" y="572" width="1042" height="1" fill="#d4d4d4" />
<rect x="10" y="572" width="25" height="1" fill="#d0d0d0" />
<rect x="36" y="592" width="1042" height="1" fill="#d4d4d4" />
<rect x="10" y="592" width="25" height="1" fill="#d0d0d0" />
<rect x="36" y="612" width="1042" height="1" fill="#d4d4d4" />
<rect x="10" y="612" width="25" height="1" fill="#d0d0d0" />
<rect x="36" y="632" width="1042" height="1" fill="#d4d4d4" />
<rect x="10" y="632" width="25" height="1" fill="#d0d0d0" />
<rect x="36" y="652" width="1042" height="1" fill="#d4d4d4" />
<rect x="10" y="652" width="25" height="1" fill="#d0d0d0" />
<rect x="36" y="672" width="1042" height="1" fill="#d4d4d4" />
<rect x="10" y="672" width="25" height="1" fill="#d0d0d0" />
<rect x="187" y="233" width="1" height="442" fill="#d4d4d4" />
<rect x="269" y="233" width="1" height="442" fill="#d4d4d4" />
<rect x="333" y="233" width="1" height="442" fill="#d4d4d4" />
<rect x="617" y="233" width="1" height="442" fill="#d4d4d4" />
<rect x="681" y="233" width="1" height="442" fill="#d4d4d4" />
<rect x="745" y="233" width="1" height="442" fill="#d4d4d4" />
<rect x="809" y="233" width="1" height="442" fill="#d4d4d4" />
<rect x="873" y="233" width="1" height="442" fill="#d4d4d4" />
<rect x="937" y="233" width="1" height="442" fill="#d4d4d4" />
<rect x="1001" y="233" width="1" height="442" fill="#d4d4d4" />
<rect x="1065" y="233" width="1" height="442" fill="#d4d4d4" />
<rect x="1078" y="232" width="1" height="444" fill="#ababab" />
<rect x="10" y="675" width="1068" height="1" fill="#ababab" />
<text x="22.50" y="247.7" font-size="13" fill="#333" text-anchor="middle" stroke="#333" stroke-width="0.1" >1</text>
<text x="22.50" y="267.7" font-size="13" fill="#333" text-anchor="middle" stroke="#333" stroke-width="0.1" >2</text>
<text x="22.50" y="287.7" font-size="13" fill="#333" text-anchor="middle" stroke="#333" stroke-width="0.1" >3</text>
<text x="22.50" y="307.7" font-size="13" fill="#333" text-anchor="middle" stroke="#333" stroke-width="0.1" >4</text>
<text x="22.50" y="327.7" font-size="13" fill="#333" text-anchor="middle" stroke="#333" stroke-width="0.1" >5</text>
<text x="22.50" y="347.7" font-size="13" fill="#333" text-anchor="middle" stroke="#333" stroke-width="0.1" >6</text>
<text x="22.50" y="367.7" font-size="13" fill="#333" text-anchor="middle" stroke="#333" stroke-width="0.1" >7</text>
<text x="22.50" y="387.7" font-size="13" fill="#333" text-anchor="middle" stroke="#333" stroke-width="0.1" >8</text>
<text x="22.50" y="407.7" font-size="13" fill="#333" text-anchor="middle" stroke="#333" stroke-width="0.1" >9</text>
<text x="22.50" y="427.7" font-size="13" fill="#333" text-anchor="middle" stroke="#333" stroke-width="0.1" >10</text>
<text x="22.50" y="447.7" font-size="13" fill="#333" text-anchor="middle" stroke="#333" stroke-width="0.1" >11</text>
<text x="22.50" y="467.7" font-size="13" fill="#333" text-anchor="middle" stroke="#333" stroke-width="0.1" >12</text>
<text x="22.50" y="487.7" font-size="13" fill="#333" text-anchor="middle" stroke="#333" stroke-width="0.1" >13</text>
<text x="22.50" y="507.7" font-size="13" fill="#333" text-anchor="middle" stroke="#333" stroke-width="0.1" >14</text>
<text x="22.50" y="527.7" font-size="13" fill="#333" text-anchor="middle" stroke="#333" stroke-width="0.1" >15</text>
<text x="22.50" y="547.7" font-size="13" fill="#333" text-anchor="middle" stroke="#333" stroke-width="0.1" >16</text>
<text x="22.50" y="567.7" font-size="13" fill="#333" text-anchor="middle" stroke="#333" stroke-width="0.1" >17</text>
<text x="22.50" y="587.7" font-size="13" fill="#333" text-anchor="middle" stroke="#333" stroke-width="0.1" >18</text>
<text x="22.50" y="607.7" font-size="13" fill="#333" text-anchor="middle" stroke="#333" stroke-width="0.1" >19</text>
<text x="22.50" y="627.7" font-size="13" fill="#333" text-anchor="middle" stroke="#333" stroke-width="0.1" >20</text>
<text x="22.50" y="647.7" font-size="13" fill="#333" text-anchor="middle" stroke="#333" stroke-width="0.1" >21</text>
<text x="22.50" y="667.7" font-size="13" fill="#333" text-anchor="middle" stroke="#333" stroke-width="0.1" >22</text>
<rect x="36" y="233" width="581" height="19" fill="#4472c4" />
<rect x="36" y="253" width="581" height="19" fill="#d9e1f2" />
<rect x="36" y="293" width="581" height="19" fill="#d9e1f2" />
<rect x="36" y="333" width="581" height="19" fill="#d9e1f2" />
<rect x="36" y="373" width="581" height="19" fill="#d9e1f2" />
<rect x="36" y="413" width="581" height="19" fill="#d9e1f2" />
<rect x="36" y="453" width="581" height="19" fill="#d9e1f2" />
<rect x="36" y="493" width="581" height="19" fill="#d9e1f2" />
<rect x="36" y="533" width="581" height="19" fill="#d9e1f2" />
<rect x="36" y="573" width="581" height="19" fill="#d9e1f2" />
<rect x="36" y="613" width="581" height="19" fill="#d9e1f2" />
<rect x="36" y="252" width="582" height="1" fill="#a2afca" />
<rect x="36" y="272" width="582" height="1" fill="#a2afca" />
<rect x="36" y="292" width="582" height="1" fill="#a2afca" />
<rect x="36" y="312" width="582" height="1" fill="#a2afca" />
<rect x="36" y="332" width="582" height="1" fill="#a2afca" />
<rect x="36" y="352" width="582" height="1" fill="#a2afca" />
<rect x="36" y="372" width="582" height="1" fill="#a2afca" />
<rect x="36" y="392" width="582" height="1" fill="#a2afca" />
<rect x="36" y="412" width="582" height="1" fill="#a2afca" />
<rect x="36" y="432" width="582" height="1" fill="#a2afca" />
<rect x="36" y="452" width="582" height="1" fill="#a2afca" />
<rect x="36" y="472" width="582" height="1" fill="#a2afca" />
<rect x="36" y="492" width="582" height="1" fill="#a2afca" />
<rect x="36" y="512" width="582" height="1" fill="#a2afca" />
<rect x="36" y="532" width="582" height="1" fill="#a2afca" />
<rect x="36" y="552" width="582" height="1" fill="#a2afca" />
<rect x="36" y="572" width="582" height="1" fill="#a2afca" />
<rect x="36" y="592" width="582" height="1" fill="#a2afca" />
<rect x="36" y="612" width="582" height="1" fill="#a2afca" />
<rect x="36" y="632" width="582" height="1" fill="#a2afca" />
<rect x="36" y="652" width="582" height="1" fill="#a2afca" />
<rect x="617" y="232" width="1" height="421" fill="#a2afca" />
<path d="M613 652h4v-4z" fill="#3e4d8c" />
<text x="38.40" y="247.5" font-size="13" fill="#fff" font-weight="bold" textLength="61.25" lengthAdjust="spacingAndGlyphs" >Kolumna1</text>
<text x="190.20" y="247.5" font-size="13" fill="#fff" font-weight="bold" textLength="34.83" lengthAdjust="spacingAndGlyphs" >Test 1</text>
<text x="272.10" y="247.5" font-size="13" fill="#fff" font-weight="bold" textLength="35.52" lengthAdjust="spacingAndGlyphs" >Test 2</text>
<text x="336.60" y="247.5" font-size="13" fill="#fff" font-weight="bold" textLength="61.25" lengthAdjust="spacingAndGlyphs" >Kolumna2</text>
<rect x="170" y="235" width="16" height="16" fill="#fff" />
<path d="M174 241h8l-4 4.5z" fill="#555"/>
<rect x="252" y="235" width="16" height="16" fill="#fff" />
<path d="M256 241h8l-4 4.5z" fill="#555"/>
<rect x="316" y="235" width="16" height="16" fill="#fff" />
<path d="M320 241h8l-4 4.5z" fill="#555"/>
<rect x="600" y="235" width="16" height="16" fill="#fff" />
<path d="M604 241h8l-4 4.5z" fill="#555"/>
<text x="38.40" y="267.7" font-size="13" fill="#1a1a1a" textLength="46.37" lengthAdjust="spacingAndGlyphs" stroke="#1a1a1a" stroke-width="0.35" >Uczeń 1</text>
<text x="253.20" y="267.7" font-size="13" fill="#1a1a1a" textLength="13.75" lengthAdjust="spacingAndGlyphs" stroke="#1a1a1a" stroke-width="0.35" >23</text>
<text x="317.70" y="267.7" font-size="13" fill="#1a1a1a" textLength="13.75" lengthAdjust="spacingAndGlyphs" stroke="#1a1a1a" stroke-width="0.35" >26</text>
<text x="336.60" y="267.7" font-size="13" fill="#1a1a1a" textLength="88.00" lengthAdjust="spacingAndGlyphs" stroke="#1a1a1a" stroke-width="0.35" >NIEZALICZONE</text>
<text x="38.40" y="287.7" font-size="13" fill="#1a1a1a" textLength="46.37" lengthAdjust="spacingAndGlyphs" stroke="#1a1a1a" stroke-width="0.35" >Uczeń 2</text>
<text x="253.20" y="287.7" font-size="13" fill="#1a1a1a" textLength="13.75" lengthAdjust="spacingAndGlyphs" stroke="#1a1a1a" stroke-width="0.35" >26</text>
<text x="317.70" y="287.7" font-size="13" fill="#1a1a1a" textLength="13.75" lengthAdjust="spacingAndGlyphs" stroke="#1a1a1a" stroke-width="0.35" >20</text>
<text x="336.60" y="287.7" font-size="13" fill="#1a1a1a" textLength="88.00" lengthAdjust="spacingAndGlyphs" stroke="#1a1a1a" stroke-width="0.35" >NIEZALICZONE</text>
<text x="38.40" y="307.7" font-size="13" fill="#1a1a1a" textLength="46.37" lengthAdjust="spacingAndGlyphs" stroke="#1a1a1a" stroke-width="0.35" >Uczeń 3</text>
<text x="253.20" y="307.7" font-size="13" fill="#1a1a1a" textLength="13.75" lengthAdjust="spacingAndGlyphs" stroke="#1a1a1a" stroke-width="0.35" >33</text>
<text x="317.70" y="307.7" font-size="13" fill="#1a1a1a" textLength="13.75" lengthAdjust="spacingAndGlyphs" stroke="#1a1a1a" stroke-width="0.35" >50</text>
<text x="336.60" y="307.7" font-size="13" fill="#1a1a1a" textLength="67.85" lengthAdjust="spacingAndGlyphs" stroke="#1a1a1a" stroke-width="0.35" >ZALICZONE</text>
<text x="38.40" y="327.7" font-size="13" fill="#1a1a1a" textLength="46.37" lengthAdjust="spacingAndGlyphs" stroke="#1a1a1a" stroke-width="0.35" >Uczeń 4</text>
<text x="253.20" y="327.7" font-size="13" fill="#1a1a1a" textLength="13.75" lengthAdjust="spacingAndGlyphs" stroke="#1a1a1a" stroke-width="0.35" >37</text>
<text x="317.70" y="327.7" font-size="13" fill="#1a1a1a" textLength="13.75" lengthAdjust="spacingAndGlyphs" stroke="#1a1a1a" stroke-width="0.35" >78</text>
<text x="336.60" y="327.7" font-size="13" fill="#1a1a1a" textLength="67.85" lengthAdjust="spacingAndGlyphs" stroke="#1a1a1a" stroke-width="0.35" >ZALICZONE</text>
<text x="38.40" y="347.7" font-size="13" fill="#1a1a1a" textLength="46.37" lengthAdjust="spacingAndGlyphs" stroke="#1a1a1a" stroke-width="0.35" >Uczeń 5</text>
<text x="253.20" y="347.7" font-size="13" fill="#1a1a1a" textLength="13.75" lengthAdjust="spacingAndGlyphs" stroke="#1a1a1a" stroke-width="0.35" >46</text>
<text x="317.70" y="347.7" font-size="13" fill="#1a1a1a" textLength="13.75" lengthAdjust="spacingAndGlyphs" stroke="#1a1a1a" stroke-width="0.35" >68</text>
<text x="336.60" y="347.7" font-size="13" fill="#1a1a1a" textLength="67.85" lengthAdjust="spacingAndGlyphs" stroke="#1a1a1a" stroke-width="0.35" >ZALICZONE</text>
<text x="38.40" y="367.7" font-size="13" fill="#1a1a1a" textLength="46.37" lengthAdjust="spacingAndGlyphs" stroke="#1a1a1a" stroke-width="0.35" >Uczeń 6</text>
<text x="253.20" y="367.7" font-size="13" fill="#1a1a1a" textLength="13.75" lengthAdjust="spacingAndGlyphs" stroke="#1a1a1a" stroke-width="0.35" >16</text>
<text x="317.70" y="367.7" font-size="13" fill="#1a1a1a" textLength="13.75" lengthAdjust="spacingAndGlyphs" stroke="#1a1a1a" stroke-width="0.35" >57</text>
<text x="336.60" y="367.7" font-size="13" fill="#1a1a1a" textLength="88.00" lengthAdjust="spacingAndGlyphs" stroke="#1a1a1a" stroke-width="0.35" >NIEZALICZONE</text>
<text x="38.40" y="387.7" font-size="13" fill="#1a1a1a" textLength="46.37" lengthAdjust="spacingAndGlyphs" stroke="#1a1a1a" stroke-width="0.35" >Uczeń 7</text>
<text x="253.20" y="387.7" font-size="13" fill="#1a1a1a" textLength="13.75" lengthAdjust="spacingAndGlyphs" stroke="#1a1a1a" stroke-width="0.35" >89</text>
<text x="317.70" y="387.7" font-size="13" fill="#1a1a1a" textLength="13.75" lengthAdjust="spacingAndGlyphs" stroke="#1a1a1a" stroke-width="0.35" >41</text>
<text x="336.60" y="387.7" font-size="13" fill="#1a1a1a" textLength="67.85" lengthAdjust="spacingAndGlyphs" stroke="#1a1a1a" stroke-width="0.35" >ZALICZONE</text>
<text x="38.40" y="407.7" font-size="13" fill="#1a1a1a" textLength="46.37" lengthAdjust="spacingAndGlyphs" stroke="#1a1a1a" stroke-width="0.35" >Uczeń 8</text>
<text x="253.20" y="407.7" font-size="13" fill="#1a1a1a" textLength="13.75" lengthAdjust="spacingAndGlyphs" stroke="#1a1a1a" stroke-width="0.35" >48</text>
<text x="317.70" y="407.7" font-size="13" fill="#1a1a1a" textLength="13.75" lengthAdjust="spacingAndGlyphs" stroke="#1a1a1a" stroke-width="0.35" >37</text>
<text x="336.60" y="407.7" font-size="13" fill="#1a1a1a" textLength="67.85" lengthAdjust="spacingAndGlyphs" stroke="#1a1a1a" stroke-width="0.35" >ZALICZONE</text>
<text x="38.40" y="427.7" font-size="13" fill="#1a1a1a" textLength="46.37" lengthAdjust="spacingAndGlyphs" stroke="#1a1a1a" stroke-width="0.35" >Uczeń 9</text>
<text x="38.40" y="447.7" font-size="13" fill="#1a1a1a" textLength="53.40" lengthAdjust="spacingAndGlyphs" stroke="#1a1a1a" stroke-width="0.35" >Uczeń 10</text>
<text x="253.20" y="447.7" font-size="13" fill="#1a1a1a" textLength="13.75" lengthAdjust="spacingAndGlyphs" stroke="#1a1a1a" stroke-width="0.35" >33</text>
<text x="317.70" y="447.7" font-size="13" fill="#1a1a1a" textLength="13.75" lengthAdjust="spacingAndGlyphs" stroke="#1a1a1a" stroke-width="0.35" >90</text>
<text x="336.60" y="447.7" font-size="13" fill="#1a1a1a" textLength="67.85" lengthAdjust="spacingAndGlyphs" stroke="#1a1a1a" stroke-width="0.35" >ZALICZONE</text>
<text x="38.40" y="467.7" font-size="13" fill="#1a1a1a" textLength="52.46" lengthAdjust="spacingAndGlyphs" stroke="#1a1a1a" stroke-width="0.35" >Uczeń 11</text>
<text x="253.20" y="467.7" font-size="13" fill="#1a1a1a" textLength="13.75" lengthAdjust="spacingAndGlyphs" stroke="#1a1a1a" stroke-width="0.35" >45</text>
<text x="317.70" y="467.7" font-size="13" fill="#1a1a1a" textLength="13.75" lengthAdjust="spacingAndGlyphs" stroke="#1a1a1a" stroke-width="0.35" >52</text>
<text x="336.60" y="467.7" font-size="13" fill="#1a1a1a" textLength="67.85" lengthAdjust="spacingAndGlyphs" stroke="#1a1a1a" stroke-width="0.35" >ZALICZONE</text>
<text x="38.40" y="487.7" font-size="13" fill="#1a1a1a" textLength="53.40" lengthAdjust="spacingAndGlyphs" stroke="#1a1a1a" stroke-width="0.35" >Uczeń 12</text>
<text x="253.20" y="487.7" font-size="13" fill="#1a1a1a" textLength="13.75" lengthAdjust="spacingAndGlyphs" stroke="#1a1a1a" stroke-width="0.35" >66</text>
<text x="317.70" y="487.7" font-size="13" fill="#1a1a1a" textLength="13.75" lengthAdjust="spacingAndGlyphs" stroke="#1a1a1a" stroke-width="0.35" >71</text>
<text x="336.60" y="487.7" font-size="13" fill="#1a1a1a" textLength="67.85" lengthAdjust="spacingAndGlyphs" stroke="#1a1a1a" stroke-width="0.35" >ZALICZONE</text>
<text x="38.40" y="507.7" font-size="13" fill="#1a1a1a" textLength="53.40" lengthAdjust="spacingAndGlyphs" stroke="#1a1a1a" stroke-width="0.35" >Uczeń 13</text>
<text x="253.20" y="507.7" font-size="13" fill="#1a1a1a" textLength="13.75" lengthAdjust="spacingAndGlyphs" stroke="#1a1a1a" stroke-width="0.35" >40</text>
<text x="317.70" y="507.7" font-size="13" fill="#1a1a1a" textLength="13.75" lengthAdjust="spacingAndGlyphs" stroke="#1a1a1a" stroke-width="0.35" >53</text>
<text x="336.60" y="507.7" font-size="13" fill="#1a1a1a" textLength="67.85" lengthAdjust="spacingAndGlyphs" stroke="#1a1a1a" stroke-width="0.35" >ZALICZONE</text>
<text x="38.40" y="547.7" font-size="13" fill="#1a1a1a" textLength="53.40" lengthAdjust="spacingAndGlyphs" stroke="#1a1a1a" stroke-width="0.35" >Uczeń 15</text>
<text x="253.20" y="547.7" font-size="13" fill="#1a1a1a" textLength="13.75" lengthAdjust="spacingAndGlyphs" stroke="#1a1a1a" stroke-width="0.35" >13</text>
<text x="317.70" y="547.7" font-size="13" fill="#1a1a1a" textLength="13.75" lengthAdjust="spacingAndGlyphs" stroke="#1a1a1a" stroke-width="0.35" >39</text>
<text x="336.60" y="547.7" font-size="13" fill="#1a1a1a" textLength="88.00" lengthAdjust="spacingAndGlyphs" stroke="#1a1a1a" stroke-width="0.35" >NIEZALICZONE</text>
<text x="38.40" y="567.7" font-size="13" fill="#1a1a1a" textLength="53.40" lengthAdjust="spacingAndGlyphs" stroke="#1a1a1a" stroke-width="0.35" >Uczeń 16</text>
<text x="253.20" y="567.7" font-size="13" fill="#1a1a1a" textLength="13.75" lengthAdjust="spacingAndGlyphs" stroke="#1a1a1a" stroke-width="0.35" >29</text>
<text x="317.70" y="567.7" font-size="13" fill="#1a1a1a" textLength="13.75" lengthAdjust="spacingAndGlyphs" stroke="#1a1a1a" stroke-width="0.35" >34</text>
<text x="336.60" y="567.7" font-size="13" fill="#1a1a1a" textLength="88.00" lengthAdjust="spacingAndGlyphs" stroke="#1a1a1a" stroke-width="0.35" >NIEZALICZONE</text>
<text x="38.40" y="587.7" font-size="13" fill="#1a1a1a" textLength="53.40" lengthAdjust="spacingAndGlyphs" stroke="#1a1a1a" stroke-width="0.35" >Uczeń 17</text>
<text x="253.20" y="587.7" font-size="13" fill="#1a1a1a" textLength="13.75" lengthAdjust="spacingAndGlyphs" stroke="#1a1a1a" stroke-width="0.35" >40</text>
<text x="317.70" y="587.7" font-size="13" fill="#1a1a1a" textLength="13.75" lengthAdjust="spacingAndGlyphs" stroke="#1a1a1a" stroke-width="0.35" >17</text>
<text x="336.60" y="587.7" font-size="13" fill="#1a1a1a" textLength="88.00" lengthAdjust="spacingAndGlyphs" stroke="#1a1a1a" stroke-width="0.35" >NIEZALICZONE</text>
<text x="38.40" y="627.7" font-size="13" fill="#1a1a1a" textLength="53.40" lengthAdjust="spacingAndGlyphs" stroke="#1a1a1a" stroke-width="0.35" >Uczeń 19</text>
<text x="253.20" y="627.7" font-size="13" fill="#1a1a1a" textLength="13.75" lengthAdjust="spacingAndGlyphs" stroke="#1a1a1a" stroke-width="0.35" >30</text>
<text x="317.70" y="627.7" font-size="13" fill="#1a1a1a" textLength="13.75" lengthAdjust="spacingAndGlyphs" stroke="#1a1a1a" stroke-width="0.35" >42</text>
<text x="336.60" y="627.7" font-size="13" fill="#1a1a1a" textLength="88.00" lengthAdjust="spacingAndGlyphs" stroke="#1a1a1a" stroke-width="0.35" >NIEZALICZONE</text>
<text x="38.40" y="647.7" font-size="13" fill="#1a1a1a" textLength="53.40" lengthAdjust="spacingAndGlyphs" stroke="#1a1a1a" stroke-width="0.35" >Uczeń 20</text>
<text x="259.85" y="647.7" font-size="13" fill="#1a1a1a" textLength="6.87" lengthAdjust="spacingAndGlyphs" stroke="#1a1a1a" stroke-width="0.35" >8</text>
<text x="324.35" y="647.7" font-size="13" fill="#1a1a1a" textLength="6.87" lengthAdjust="spacingAndGlyphs" stroke="#1a1a1a" stroke-width="0.35" >0</text>
<text x="336.60" y="647.7" font-size="13" fill="#1a1a1a" textLength="88.00" lengthAdjust="spacingAndGlyphs" stroke="#1a1a1a" stroke-width="0.35" >NIEZALICZONE</text>
<rect x="1079" y="210" width="21" height="466" fill="#e6e6e6" />
<rect x="1082" y="246" width="14" height="394" fill="#ffffff" stroke="#c6c6c6" stroke-width="0"/>
<rect x="1082.5" y="246.5" width="13.5" height="393.5" fill="#fff" stroke="#c6c6c6" stroke-width="1"/>
<rect x="1082.5" y="661.5" width="13.5" height="13" fill="#fff" stroke="#d0d0d0" stroke-width="1"/>
<path d="M1085.5 666h7l-3.5 4z" fill="#555" />
<rect x="10" y="676" width="1090" height="27" fill="#e6e6e6" />
<path d="M41 685v7l-3.5-3.5z" fill="#c0c0c0" />
<path d="M66 685v7l3.5-3.5z" fill="#c0c0c0" />
<rect x="110" y="675" width="72" height="25" fill="#ffffff" />
<rect x="110" y="675" width="1" height="25" fill="#c6c6c6" />
<rect x="181" y="675" width="1" height="25" fill="#c6c6c6" />
<rect x="110" y="698" width="72" height="2" fill="#2a7a4e" />
<text x="122.40" y="692.5" font-size="13" fill="#217346" font-weight="bold" textLength="45.93" lengthAdjust="spacingAndGlyphs" >Arkusz1</text>
<circle cx="223" cy="688.5" r="7.5" fill="none" stroke="#666" stroke-width="1.2"/>
<path d="M219 688.5h8M223 684.5v8" fill="none" stroke="#666" stroke-width="1.6" />
<rect x="664" y="684" width="2" height="2" fill="#aaa" />
<rect x="664" y="688" width="2" height="2" fill="#aaa" />
<rect x="664" y="692" width="2" height="2" fill="#aaa" />
<rect x="681.5" y="682.5" width="398" height="14" fill="#dcdcdc" stroke="#c6c6c6" stroke-width="1"/>
<rect x="681.5" y="682.5" width="14" height="14" fill="#fff" stroke="#c6c6c6" stroke-width="1"/>
<rect x="696.5" y="682.5" width="333" height="14" fill="#fff" stroke="#c6c6c6" stroke-width="1"/>
<rect x="1066.5" y="682.5" width="13" height="14" fill="#fff" stroke="#c6c6c6" stroke-width="1"/>
<path d="M690 686v7l-3.5-3.5z" fill="#555" />
<path d="M1071 686v7l3.5-3.5z" fill="#555" />
<rect x="10" y="703" width="1090" height="1" fill="#d4d4d4" />
<rect x="10" y="704" width="1090" height="20" fill="#f2f2f2" />
<text x="18.40" y="717" font-size="12" fill="#444" textLength="39.28" lengthAdjust="spacingAndGlyphs" stroke="#444" stroke-width="0.2" >Gotowy</text>
<rect x="803" y="704" width="38" height="20" fill="#c5c5c5" />
<rect x="815" y="708" width="1" height="13" fill="#555" />
<rect x="819" y="708" width="1" height="13" fill="#555" />
<rect x="824" y="708" width="1" height="13" fill="#555" />
<rect x="828" y="708" width="1" height="13" fill="#555" />
<rect x="815" y="708" width="14" height="1" fill="#555" />
<rect x="815" y="712" width="14" height="1" fill="#555" />
<rect x="815" y="716" width="14" height="1" fill="#555" />
<rect x="815" y="720" width="14" height="1" fill="#555" />
<rect x="853.5" y="707.5" width="13" height="12" fill="none" stroke="#555" stroke-width="1"/>
<rect x="856" y="710" width="9" height="1" fill="#555" />
<rect x="856" y="712" width="9" height="1" fill="#555" />
<rect x="856" y="714" width="9" height="1" fill="#555" />
<rect x="856" y="716" width="9" height="1" fill="#555" />
<rect x="891.5" y="707.5" width="13" height="12" fill="none" stroke="#555" stroke-width="1"/>
<rect x="897" y="708" width="1" height="6" fill="#555" />
<rect x="892" y="714" width="12" height="1" fill="#555" />
<rect x="922" y="713" width="6" height="1.5" fill="#444" />
<rect x="933" y="713" width="98" height="1" fill="#9a9a9a" />
<rect x="981" y="707" width="4" height="12" fill="#555" />
<rect x="1035" y="713" width="8" height="1.5" fill="#444" />
<rect x="1038.2" y="709.7" width="1.5" height="8" fill="#444" />
<text x="1054.50" y="717" font-size="12" fill="#555" textLength="26.03" lengthAdjust="spacingAndGlyphs" stroke="#555" stroke-width="0.1" >100%</text>
<rect x="1011" y="149" width="237" height="270" fill="rgba(0,0,0,0.22)" filter="url(#msh)"/>
<rect x="1009.5" y="146.5" width="236" height="269" fill="#fff" stroke="#c6c6c6" stroke-width="1"/>
<rect x="1012" y="220" width="233" height="24" fill="#c6c6c6" />
<text x="1043.40" y="163.6" font-size="12" fill="#444" textLength="43.30" lengthAdjust="spacingAndGlyphs" stroke="#444" stroke-width="0.2" >Znajdź...</text>
<rect x="1050.3" y="165.1" width="6.3" height="1" fill="#666"/>
<text x="1043.40" y="188.2" font-size="12" fill="#444" textLength="48.20" lengthAdjust="spacingAndGlyphs" stroke="#444" stroke-width="0.2" >Zamień...</text>
<rect x="1043.4" y="189.7" width="7.1" height="1" fill="#666"/>
<text x="1043.40" y="211.9" font-size="12" fill="#444" textLength="61.70" lengthAdjust="spacingAndGlyphs" stroke="#444" stroke-width="0.2" >Przejdź do...</text>
<rect x="1050.8" y="213.4" width="3.7" height="1" fill="#666"/>
<text x="1043.40" y="235.5" font-size="12" fill="#444" textLength="131.62" lengthAdjust="spacingAndGlyphs" stroke="#444" stroke-width="0.2" >Przejdź do — specjalnie...</text>
<rect x="1114.9" y="237.0" width="5.7" height="1" fill="#666"/>
<text x="1043.40" y="262.6" font-size="12" fill="#444" textLength="44.15" lengthAdjust="spacingAndGlyphs" stroke="#444" stroke-width="0.2" >Formuły</text>
<rect x="1043.4" y="264.1" width="7.5" height="1" fill="#666"/>
<text x="1043.40" y="286.1" font-size="12" fill="#444" textLength="62.70" lengthAdjust="spacingAndGlyphs" stroke="#444" stroke-width="0.2" >Komentarze</text>
<rect x="1067.3" y="287.6" width="6.5" height="1" fill="#666"/>
<text x="1043.40" y="309.6" font-size="12" fill="#444" textLength="140.16" lengthAdjust="spacingAndGlyphs" stroke="#444" stroke-width="0.2" >Formatowanie warunkowe</text>
<rect x="1142.2" y="311.1" width="6.7" height="1" fill="#666"/>
<text x="1043.40" y="333.8" font-size="12" fill="#444" textLength="24.41" lengthAdjust="spacingAndGlyphs" stroke="#444" stroke-width="0.2" >Stałe</text>
<rect x="1050.5" y="335.3" width="3.0" height="1" fill="#666"/>
<text x="1043.40" y="357.3" font-size="12" fill="#444" textLength="178.69" lengthAdjust="spacingAndGlyphs" stroke="#444" stroke-width="0.2" >Sprawdzanie poprawności danych</text>
<rect x="1068.3" y="358.8" width="8.5" height="1" fill="#666"/>
<text x="1043.40" y="383.6" font-size="12" fill="#444" textLength="83.90" lengthAdjust="spacingAndGlyphs" stroke="#444" stroke-width="0.2" >Zaznacz obiekty</text>
<rect x="1090.5" y="385.1" width="6.5" height="1" fill="#666"/>
<text x="1043.40" y="407.1" font-size="12" fill="#444" textLength="108.14" lengthAdjust="spacingAndGlyphs" stroke="#444" stroke-width="0.2" >Okienko zaznaczenia</text>
<rect x="1052.2" y="408.6" width="5.7" height="1" fill="#666"/>
<rect x="1043" y="366" width="202" height="1" fill="#e1e1e1" />
<circle cx="1024.2" cy="158.3" r="3.7" fill="none" stroke="#4a6f99" stroke-width="1.9"/>
<path d="M1021.4 161.2l-4 4" fill="none" stroke="#4a6f99" stroke-width="2.4" stroke-linecap="round"/>
<text x="1015.00" y="183.5" font-size="10.5" fill="#4a4a4a" textLength="10.71" lengthAdjust="spacingAndGlyphs" stroke="#4a4a4a" stroke-width="0.3" >ab</text>
<text x="1020.00" y="190.5" font-size="10.5" fill="#4a4a5a" textLength="10.17" lengthAdjust="spacingAndGlyphs" stroke="#4a4a5a" stroke-width="0.3" >ac</text>
<path d="M1016.5 185.5v3h2.5M1017.5 187.5l1.5 1-1.5 1" fill="none" stroke="#555" stroke-width="0.8" />
<path d="M1017.5 208h9.5M1023 204.2l3.8 3.8-3.8 3.8" fill="none" stroke="#3f6ca8" stroke-width="2.2" />
<path d="M1019.5 372.5v13l3-3 2.5 4.5 2-1-2.5-4.5h4z" fill="#fff" stroke="#555" stroke-width="1" />
<rect x="1015.5" y="396.5" width="6" height="6" fill="none" stroke="#555" stroke-width="1"/>
<rect x="1015.5" y="405.5" width="6" height="6" fill="none" stroke="#555" stroke-width="1"/>
<rect x="1022" y="397" width="6" height="1.5" fill="#cfd7a8" />
<path d="M1024.5 400.5v11l2.5-2.5 2 3.5 1.5-1-2-3.5h3.5z" fill="#fff" stroke="#555" stroke-width="1" />
<path d="M926.9 288.6L916.8 269.2L982.6 234.2L979.2 222.8L1016.8 230.2L1001.4 265.8L995.4 255.7Z" fill="url(#ag)" stroke="#a01610" stroke-width="2.5" stroke-linejoin="miter"/>
</svg>
</body></html>
